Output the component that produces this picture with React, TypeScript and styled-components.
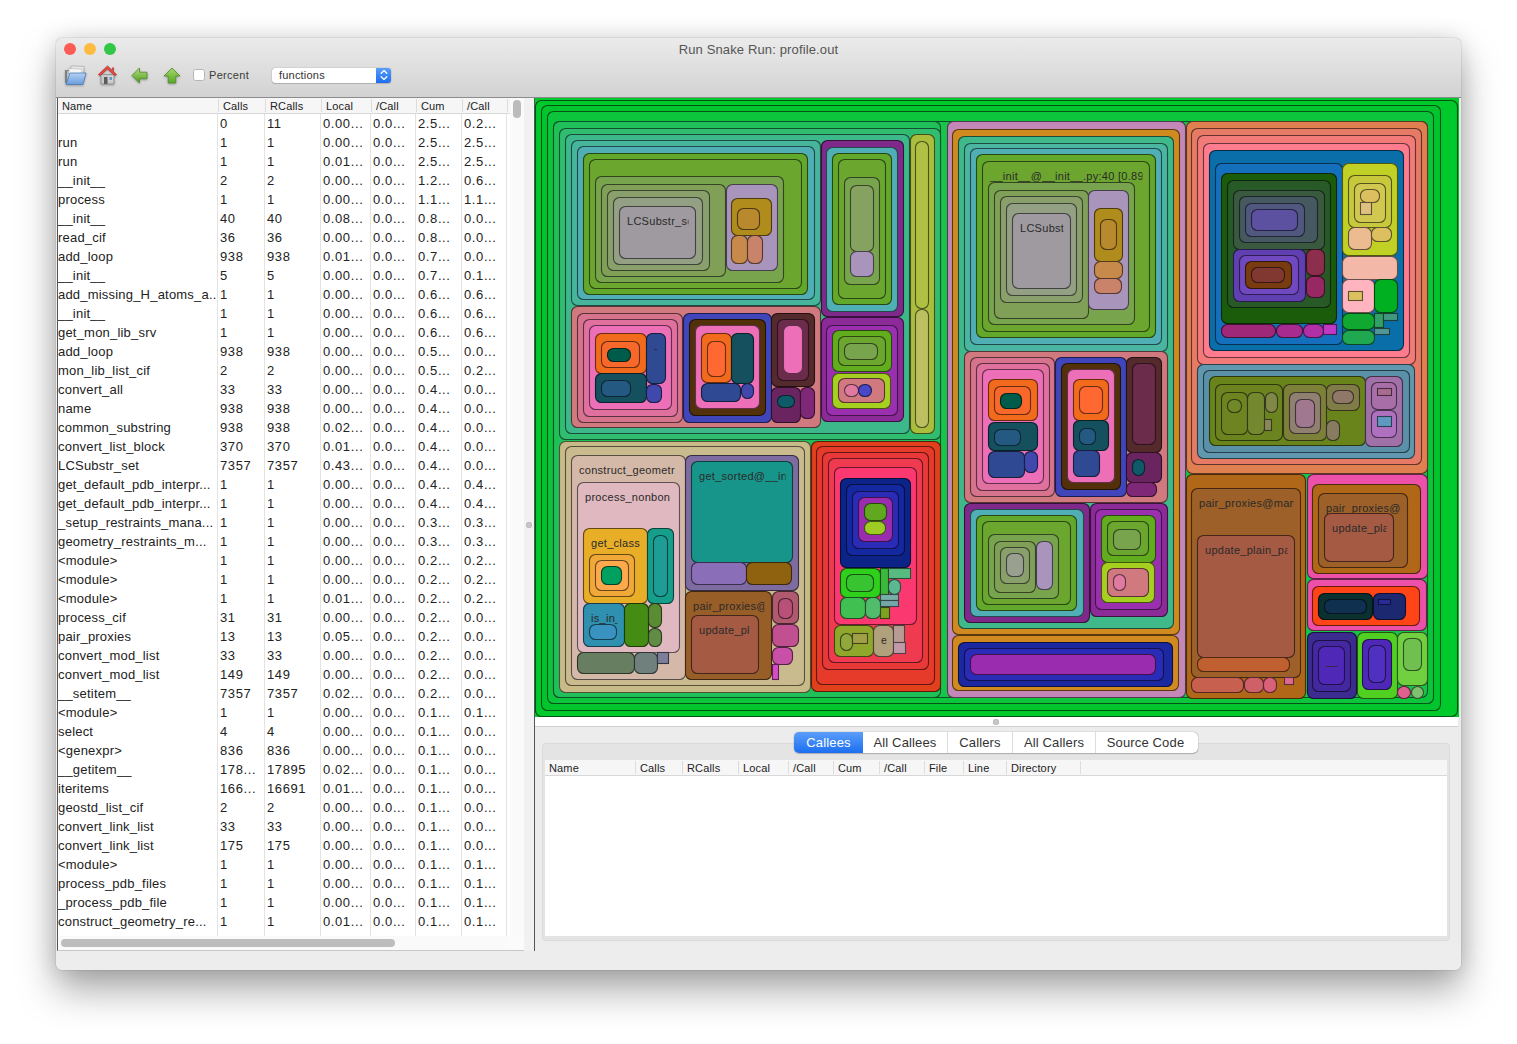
import React from "react";
import styled, { createGlobalStyle } from "styled-components";

const Global = createGlobalStyle`
  html, body { margin: 0; padding: 0; background: #fff; }
  body { font-family: "Liberation Sans", Arial, sans-serif; width: 1517px; height: 1044px; overflow: hidden; }
`;

const Win = styled.div`
  width: 1405px; height: 932px; margin: 38px 0 0 56px;
  display: flex; flex-direction: column;
  border-radius: 6px; background: #ececec;
  box-shadow: 0 0 1px rgba(0,0,0,.55), 0 20px 38px rgba(0,0,0,.34), 0 0 22px rgba(0,0,0,.13);
`;
const TitleBar = styled.header`
  height: 59px; flex: none; border-radius: 6px 6px 0 0;
  background: linear-gradient(#ebebeb, #d2d2d2);
`;
const TitleRow = styled.div`
  height: 22px; box-sizing: border-box;
  display: grid; grid-template-columns: 1fr auto 1fr; align-items: center;
`;
const Lights = styled.div`display: flex; gap: 8px; padding-left: 8px;`;
const Light = styled.span<{ $c: string }>`
  width: 12px; height: 12px; border-radius: 50%; background: ${p => p.$c};
`;
const Title = styled.div`font-size: 13px; color: #555; letter-spacing: .14px;`;
const Toolbar = styled.div`
  height: 30px; display: flex; align-items: center; padding-left: 8px; box-sizing: border-box;
`;
const Tool = styled.svg<{ $gap: number }>`
  margin-left: ${p => p.$gap}px; flex: none;
  filter: drop-shadow(0 1px 1px rgba(0,0,0,.28)) blur(.3px);
`;
const Check = styled.span`
  width: 10px; height: 10px; margin-left: 12px; background: #fff; border: 1px solid #b5b5b5; border-radius: 2.5px;
`;
const CheckLabel = styled.span`font-size: 11px; color: #3a3a3a; margin-left: 4px; letter-spacing: .3px;`;
const Select = styled.div`
  margin-left: 23px; width: 119px; height: 15px; display: flex; justify-content: space-between;
  background: #fff; border-radius: 3px; box-shadow: 0 0 1px rgba(0,0,0,.5), 0 1px 1px rgba(0,0,0,.15);
  font-size: 11px; color: #333; line-height: 15px; letter-spacing: .2px; padding-left: 7px; box-sizing: border-box;
`;
const SelectBtn = styled.span`
  width: 15px; background: linear-gradient(#5a9ff8, #1d6df0); border-radius: 0 3px 3px 0;
  display: flex; align-items: center; justify-content: center;
`;

const Main = styled.main`flex: 1; display: flex; min-height: 0; border-top: 1px solid #8c8c8c;`;
const LeftPane = styled.section`
  width: 466px; margin-left: 1px; flex: none; display: flex; flex-direction: column;
  border-left: 1px solid #555; border-bottom: 1px solid #c8c8c8; background: #fbfbfb;
`;
const ListWrap = styled.div`flex: 1; display: flex; min-height: 0;`;
const List = styled.div`width: 452px; display: flex; flex-direction: column; background: #fff;`;
const HeadRow = styled.div<{ $cols: string; $h: number }>`
  display: grid; grid-template-columns: ${p => p.$cols}; height: ${p => p.$h}px; flex: none;
  background: #f6f6f6; border-bottom: 1px solid #d8d8d8; box-sizing: border-box;
`;
const HeadCell = styled.div`
  font-size: 11px; color: #222; padding: 0 0 0 4px; line-height: 14px; letter-spacing: .15px;
  border-right: 1px solid #dcdcdc; margin: 1px 0; white-space: nowrap; overflow: hidden;
`;
const Row = styled.div<{ $fill?: boolean }>`
  display: grid; grid-template-columns: 160px 47px 56px 50px 45px 46px 45px;
  height: 19px; flex: ${p => (p.$fill ? "1" : "none")};
`;
const Cell = styled.div`
  font-size: 13px; color: #222; line-height: 19px; padding-left: 2px; white-space: nowrap; overflow: hidden;
  border-right: 1px solid #e3e3e3; letter-spacing: .6px;
`;
const NameCell = styled(Cell)`padding-left: 0; letter-spacing: .2px;`;
const VScroll = styled.div`flex: 1; background: #fafafa; padding: 2px 0 0 3px;`;
const VThumb = styled.div`width: 8px; height: 18px; border-radius: 4px; background: #bcbcbc;`;
const HScroll = styled.div`
  height: 14px; flex: none; box-sizing: border-box; background: #fafafa; padding: 3px 0 0 3px; margin-right: 14px;
`;
const HThumb = styled.div`width: 334px; height: 8px; border-radius: 4px; background: #bdbdbd;`;
const Sash = styled.div`width: 10px; flex: none; background: #f1f1f1; display: flex; align-items: center; justify-content: center;`;
const Dot = styled.span`width: 6px; height: 6px; border-radius: 50%; background: #c8c8c8; box-shadow: inset 0 0 0 1px #bbb;`;
const RightPane = styled.section`
  flex: 1; min-width: 0; display: flex; flex-direction: column; border-left: 1px solid #555; padding-right: 3px;
`;
const MapSvg = styled.svg`display: block; flex: none; background: #4a4a4a;`;
const MapRect = styled.rect`stroke-width: 1.1;`;
const MapLabel = styled.text`
  font-family: "Liberation Sans", Arial, sans-serif; font-size: 11px; fill: #2a2a2a; letter-spacing: .28px;
`;
const HSash = styled.div`
  height: 9px; flex: none; background: #fff; display: flex; justify-content: center; align-items: center; padding-right: 2px;
  border-bottom: 1px solid #cfcfcf;
`;
const Notebook = styled.div`flex: 1; min-height: 0; margin: 16px 8px 10px 7px; display: flex; flex-direction: column;
  background: #e4e4e4; border: 1px solid #dadada; border-radius: 4px; padding: 0 2px 4px;`;
const Tabs = styled.div`
  align-self: center; display: flex; height: 21px; margin-top: -12px; margin-bottom: 7px; flex: none;
  background: #fff; border-radius: 5px; box-shadow: 0 0 1px rgba(0,0,0,.55), 0 1px 1px rgba(0,0,0,.2);
`;
const Tab = styled.div<{ $w: number; $on?: boolean }>`
  width: ${p => p.$w}px; text-align: center; font-size: 13px; line-height: 21px; letter-spacing: .15px;
  color: ${p => (p.$on ? "#fff" : "#333")};
  background: ${p => (p.$on ? "linear-gradient(#5b9ef9, #1c6ff1)" : "transparent")};
  border-radius: ${p => (p.$on ? "5px 0 0 5px" : "0")};
  border-right: ${p => (p.$on ? "none" : "1px solid #ddd")};
  box-sizing: border-box;
  &:last-child { border-right: none; padding-right: 3px; }
`;
const Detail = styled.div`flex: 1; background: #fff; display: flex; flex-direction: column;`;
const Bottom = styled.footer`height: 19px; flex: none; border-radius: 0 0 6px 6px; background: #ededed;`;

type N = [number, number, number, number, string, string?, number?];
const nodes: N[] = [
  [535,100,1457,716,"#00c92c"],[541,105,1440,710,"#02c52e"],[547,111,1433,703,"#0cc53c"],[553,121,1427,697,"#17c44c"],
  [553,121,940,697,"#1fc05a"],[559,128,940,439,"#30bd70"],[565,134,909,433,"#3cb88a"],
  [571,140,820,305,"#46b59c"],[577,146,814,299,"#50afb5"],[583,153,807,294,"#62a82a"],[589,159,801,288,"#6ba62e"],[595,176,783,282,"#78a44d"],[601,184,725,276,"#80a058"],[607,190,709,270,"#8aa06c"],[613,197,702,264,"#94a083"],[619,206,695,258,"#9e9aa0","LCSubstr_se"],
  [726,184,777,270,"#a995bc"],[731,198,771,235,"#b08c1d"],[737,208,759,229,"#b8892d"],[731,235,747,263,"#c78a4a"],[747,235,762,263,"#c9836a"],
  [821,140,903,316,"#7f2a8a"],[826,147,897,311,"#50afb5"],[832,153,891,304,"#62a82a"],[838,159,885,298,"#6ba62e"],[844,177,879,284,"#78a44d"],[850,185,873,251,"#86a261"],[850,251,873,276,"#a995bc"],
  [571,306,820,427,"#d07a80"],[577,313,682,422,"#d5748c"],[583,319,677,416,"#e0709e"],[589,325,671,409,"#ec6fb8"],[595,333,646,373,"#f26a1c"],[601,341,639,367,"#f8682b"],[607,348,630,361,"#005c4a"],[646,333,665,383,"#2f4a92","-"],[595,373,646,402,"#14505e"],[601,380,630,396,"#245a82"],[646,384,661,402,"#4048ac"],
  [683,313,771,422,"#4046ba"],[689,319,765,415,"#52300a"],[695,325,759,408,"#ec6fb8"],[701,333,731,382,"#f26a1c"],[707,341,725,376,"#ff6830"],[731,333,753,383,"#14505e"],[701,383,740,401,"#2f4a92"],[741,383,753,398,"#4048ac"],
  [771,313,814,386,"#552a2c"],[777,319,808,380,"#6a2c4a"],[783,325,802,373,"#ec6fb8"],[771,387,800,422,"#6a2560"],[777,395,794,407,"#0f5a68"],[800,387,814,418,"#802878"],
  [821,317,903,421,"#8c2a98"],[826,325,897,415,"#9a30b0"],[832,330,891,371,"#62ad1e"],[838,336,885,365,"#6ba62e"],[844,343,877,359,"#78a44d"],[832,373,890,408,"#a5d020"],[838,378,884,402,"#d07a80"],[844,384,858,396,"#e07aa0"],[858,384,871,396,"#4a48c8"],
  [910,134,934,433,"#aabd3c"],[915,141,928,308,"#b0c044"],[915,309,928,427,"#bcc060"],
  [559,441,810,692,"#c8bb88"],[565,446,804,685,"#cabb8e"],[571,455,685,679,"#d5b9a8","construct_geometr"],[577,482,679,652,"#dfb8c0","process_nonbon"],
  [583,528,647,603,"#e8ae28","get_class"],[589,554,634,596,"#f0a838"],[595,560,628,590,"#ffa84c"],[601,566,621,584,"#00a060"],[647,528,673,603,"#159f8a"],[653,535,667,596,"#1d9d95"],
  [583,603,624,646,"#2f90b0","is_in_"],[589,624,616,639,"#3a92c0"],[624,603,648,646,"#448c14"],[648,603,661,627,"#5a8c34"],[648,628,661,646,"#608c44"],
  [577,652,634,673,"#687e60"],[634,652,657,673,"#70807c"],[657,652,668,663,"#7c7e9c","",1],
  [685,455,798,590,"#7e6ba0"],[691,461,792,562,"#18958a","get_sorted@__in"],[691,562,746,584,"#8a6eb8"],[746,562,791,584,"#8f6210"],
  [685,591,771,679,"#985e28","pair_proxies@"],[691,615,758,673,"#a55a44","update_pl"],[772,591,798,623,"#b05a70"],[778,598,792,618,"#b85078"],[772,624,798,646,"#c05090"],[772,647,792,664,"#c850a8"],[772,664,778,679,"#d84cc8","",1],
  [811,441,940,691,"#e0401c"],[816,446,934,684,"#e63a2a"],[822,452,928,669,"#e83838"],[828,458,922,662,"#f03a50"],[834,467,916,624,"#fc3870"],
  [840,478,910,567,"#0c2488"],[846,484,904,555,"#1428a0"],[852,491,898,548,"#2a2cb8"],[858,497,892,541,"#9a2cb0"],[864,503,886,520,"#5fa820"],[864,521,885,534,"#9ecc24"],
  [840,568,880,597,"#2ed01c"],[846,574,873,591,"#38c430"],[880,568,888,594,"#3cb93a","",1],[888,568,910,578,"#58bc80","",1],[888,579,900,594,"#5cb890"],[880,594,898,600,"#78b0a8","",1],[880,600,898,606,"#74a8a8","",1],[880,607,889,618,"#80a020","",1],
  [840,597,865,618,"#40c050"],[865,597,880,618,"#50bc6c"],[834,625,873,656,"#8fa82c"],[840,633,852,650,"#90a83c"],[852,633,867,643,"#a0a048","",1],
  [873,625,893,656,"#b0a07c","e"],[893,625,904,642,"#b89c94","",1],[893,642,905,653,"#c098a8","",1],
  [947,121,1185,697,"#c488b8"],[952,129,1179,634,"#d08a20"],[958,136,1173,628,"#3fb88a"],[964,143,1167,351,"#4ab5a0"],[970,148,1161,344,"#50afb5"],[976,154,1155,337,"#62a82a"],
  [982,161,1149,331,"#6ca62e","__init__@__init__.py:40 [0.891"],[988,182,1134,324,"#78a44d"],[994,190,1088,318,"#80a058"],[1000,196,1082,302,"#8aa06c"],[1006,203,1076,295,"#94a083"],[1012,213,1070,288,"#9e9aa0","LCSubst"],
  [1088,190,1128,309,"#a995bc"],[1094,208,1122,261,"#b08c1d"],[1100,219,1116,249,"#b8892d"],[1094,261,1122,278,"#c78a4a"],[1094,278,1121,293,"#c9836a"],
  [964,351,1167,502,"#d07a80"],[970,357,1054,496,"#d5748c"],[976,363,1049,490,"#e0709e"],[982,369,1043,483,"#ec6fb8"],[988,379,1037,420,"#f26a1c"],[994,386,1030,414,"#f8682b"],[1000,393,1021,408,"#005c4a"],[988,422,1037,450,"#14505e"],[994,429,1020,445,"#245a82"],[988,451,1024,477,"#2f4a92"],[1024,451,1037,472,"#4048ac"],
  [1055,357,1126,496,"#4046ba"],[1061,363,1120,489,"#52300a"],[1067,369,1114,482,"#ec6fb8"],[1073,379,1108,420,"#f26a1c"],[1079,386,1102,413,"#ff6830"],[1073,420,1108,450,"#14505e"],[1079,428,1095,444,"#245a82"],[1073,450,1099,476,"#2f4a92"],
  [1126,357,1161,452,"#552a2c"],[1132,363,1155,444,"#6a2c4a"],[1126,452,1161,482,"#6a2560"],[1132,459,1144,475,"#0f5a68"],[1126,482,1156,496,"#802878"],
  [964,503,1089,622,"#7f2a8a"],[970,509,1083,616,"#50afb5"],[976,515,1076,610,"#62a82a"],[982,521,1070,604,"#6ba62e"],[988,534,1058,598,"#78a44d"],[994,541,1035,592,"#80a058"],[1000,547,1029,583,"#8aa06c"],[1006,553,1023,576,"#9aa090"],[1036,541,1052,589,"#a995bc"],
  [1090,503,1167,616,"#8c2a98"],[1095,509,1161,609,"#9a30b0"],[1101,515,1155,562,"#62ad1e"],[1107,521,1148,555,"#6ba62e"],[1113,529,1140,549,"#78a44d"],[1101,562,1154,602,"#a5d020"],[1107,568,1148,596,"#d07a80"],[1113,574,1125,590,"#e07aa0"],
  [952,635,1178,690,"#d08a20"],[958,642,1172,686,"#1c28a0"],[964,648,1163,680,"#2a2cb8"],[970,654,1155,674,"#9a2cb0"],
  [1186,121,1427,473,"#e08050"],[1191,128,1421,464,"#e67a64"],[1197,135,1415,364,"#f27a78"],[1203,143,1409,357,"#ff7c8e"],[1209,150,1403,350,"#0a6fa8"],[1215,163,1342,344,"#1470bc"],
  [1221,173,1336,323,"#1a5c0a"],[1227,180,1330,307,"#285a28"],[1233,190,1324,249,"#3a5a40"],[1239,196,1317,242,"#465860"],[1245,203,1304,236,"#505880"],[1251,209,1297,230,"#5c50a0"],
  [1233,249,1305,301,"#6040b0"],[1239,255,1298,294,"#7048c0"],[1245,261,1291,288,"#783c10"],[1251,267,1284,282,"#803830"],[1306,249,1324,275,"#8c2e4c"],[1306,276,1324,297,"#982864"],
  [1221,324,1275,337,"#a02878"],[1276,324,1302,337,"#a82c90"],[1303,324,1323,337,"#b030a8"],[1323,324,1336,334,"#c038c4","",1],
  [1342,163,1397,255,"#c0d024"],[1348,175,1391,227,"#c8c83c"],[1354,183,1385,222,"#d0c850"],[1360,189,1379,202,"#dcc060"],[1360,202,1371,214,"#e0c080","",1],[1348,227,1371,249,"#ecbc90"],[1371,227,1391,241,"#dcc060"],
  [1342,256,1397,279,"#f4b8a8"],[1342,279,1374,312,"#ffb4c0"],[1348,291,1362,300,"#dcc060","",1],[1374,279,1397,312,"#00b020"],[1342,313,1374,329,"#10a830"],[1342,330,1374,344,"#20a850"],
  [1374,313,1383,327,"#30a068","",1],[1383,313,1397,320,"#409880","",1],[1374,328,1389,334,"#509898","",1],
  [1197,364,1414,458,"#6098b0"],[1203,370,1409,452,"#5a90a8"],[1209,376,1365,445,"#68841a"],[1215,384,1282,440,"#6c8420"],[1221,392,1247,434,"#6e8420"],[1227,399,1241,412,"#708828"],[1247,392,1264,434,"#748830"],[1265,392,1277,412,"#808848"],[1264,419,1271,430,"#888858","",1],
  [1283,384,1326,440,"#7c8038"],[1289,392,1320,433,"#908070"],[1295,399,1314,427,"#a07890"],[1326,384,1359,410,"#807c48"],[1332,390,1353,403,"#907868"],[1326,420,1339,440,"#887c60"],
  [1365,376,1402,446,"#a070a8"],[1371,382,1396,409,"#a86ea8"],[1377,388,1391,395,"#a86c90","",1],[1371,410,1396,437,"#b070c0"],[1377,416,1391,426,"#6098c0","",1],
  [1186,474,1305,698,"#b06818"],[1191,488,1300,677,"#9c6028","pair_proxies@man"],[1197,535,1294,657,"#a55a44","update_plain_pa"],[1197,657,1289,671,"#c06030"],[1191,677,1243,692,"#c86050"],[1244,677,1263,692,"#d06068"],[1263,677,1276,692,"#d86078"],[1284,677,1293,684,"#e06890","",1],
  [1307,474,1427,578,"#ec50a8"],[1312,484,1420,573,"#b06818"],[1318,493,1407,567,"#9c6028","pair_proxies@"],[1324,513,1393,561,"#a55a44","update_pla"],
  [1307,579,1426,630,"#ec50a8"],[1312,586,1419,625,"#ff4418"],[1318,593,1372,619,"#0a3030"],[1324,599,1366,613,"#103050"],[1373,593,1405,619,"#1c2870"],[1378,599,1390,604,"#2a2c98","",1],
  [1307,632,1356,698,"#3c2c90"],[1312,640,1350,691,"#4428a0"],[1318,646,1344,684,"#5028b8","__i"],[1357,632,1397,698,"#50d020"],[1362,639,1391,689,"#5028b8"],[1368,645,1385,682,"#5030c0"],
  [1397,632,1427,685,"#70d040"],[1403,638,1421,670,"#70c050"],[1397,686,1410,698,"#e06090"],[1411,686,1423,698,"#80c070"],
];

const darken = (hex: string) => {
  const n = parseInt(hex.slice(1), 16);
  const f = (v: number) => Math.round(v * 0.42);
  return `rgb(${f(n >> 16)},${f((n >> 8) & 255)},${f(n & 255)})`;
};

const rows = `|0|11|0.00|0.0|2.5|0.2
run|1|1|0.00|0.0|2.5|2.5
run|1|1|0.01|0.0|2.5|2.5
__init__|2|2|0.00|0.0|1.2|0.6
process|1|1|0.00|0.0|1.1|1.1
__init__|40|40|0.08|0.0|0.8|0.0
read_cif|36|36|0.00|0.0|0.8|0.0
add_loop|938|938|0.01|0.0|0.7|0.0
__init__|5|5|0.00|0.0|0.7|0.1
add_missing_H_atoms_a..|1|1|0.00|0.0|0.6|0.6
__init__|1|1|0.00|0.0|0.6|0.6
get_mon_lib_srv|1|1|0.00|0.0|0.6|0.6
add_loop|938|938|0.00|0.0|0.5|0.0
mon_lib_list_cif|2|2|0.00|0.0|0.5|0.2
convert_all|33|33|0.00|0.0|0.4|0.0
name|938|938|0.00|0.0|0.4|0.0
common_substring|938|938|0.02|0.0|0.4|0.0
convert_list_block|370|370|0.01|0.0|0.4|0.0
LCSubstr_set|7357|7357|0.43|0.0|0.4|0.0
get_default_pdb_interpr...|1|1|0.00|0.0|0.4|0.4
get_default_pdb_interpr...|1|1|0.00|0.0|0.4|0.4
_setup_restraints_mana...|1|1|0.00|0.0|0.3|0.3
geometry_restraints_m...|1|1|0.00|0.0|0.3|0.3
<module>|1|1|0.00|0.0|0.2|0.2
<module>|1|1|0.00|0.0|0.2|0.2
<module>|1|1|0.01|0.0|0.2|0.2
process_cif|31|31|0.00|0.0|0.2|0.0
pair_proxies|13|13|0.05|0.0|0.2|0.0
convert_mod_list|33|33|0.00|0.0|0.2|0.0
convert_mod_list|149|149|0.00|0.0|0.2|0.0
__setitem__|7357|7357|0.02|0.0|0.2|0.0
<module>|1|1|0.00|0.0|0.1|0.1
select|4|4|0.00|0.0|0.1|0.0
<genexpr>|836|836|0.00|0.0|0.1|0.0
__getitem__|178...|17895|0.02|0.0|0.1|0.0
iteritems|166...|16691|0.01|0.0|0.1|0.0
geostd_list_cif|2|2|0.00|0.0|0.1|0.0
convert_link_list|33|33|0.00|0.0|0.1|0.0
convert_link_list|175|175|0.00|0.0|0.1|0.0
<module>|1|1|0.00|0.0|0.1|0.1
process_pdb_files|1|1|0.00|0.0|0.1|0.1
_process_pdb_file|1|1|0.00|0.0|0.1|0.1
construct_geometry_re...|1|1|0.01|0.0|0.1|0.1`.split("\n").map(l => l.split("|"));

const listCols = "161px 47px 56px 50px 45px 46px 45px";
const listHead = ["Name", "Calls", "RCalls", "Local", "/Call", "Cum", "/Call"];
const detailCols = "91px 47px 56px 50px 45px 46px 45px 39px 43px 74px";
const detailHead = ["Name", "Calls", "RCalls", "Local", "/Call", "Cum", "/Call", "File", "Line", "Directory"];

const FolderIcon = () => (
  <Tool $gap={0} width="23" height="21" viewBox="0 0 23 21">
    <defs>
      <linearGradient id="fb" x1="0" y1="0" x2="0" y2="1"><stop offset="0" stopColor="#b4d3f5" /><stop offset="1" stopColor="#6a9cdb" /></linearGradient>
    </defs>
    <path d="M1 5h6l1-2h6v3H3v12H1z" fill="#7a8086" />
    <path d="M7 1l13 .5-.5 7H7z" fill="#e8e8e8" stroke="#a8a8a8" strokeWidth=".6" />
    <path d="M5 3.5l13 .5-.5 5H5z" fill="#f5f5f5" stroke="#b5b5b5" strokeWidth=".6" />
    <path d="M6 8h16l-3 11.5H2z" fill="url(#fb)" stroke="#4d7ab0" strokeWidth=".8" strokeLinejoin="round" />
  </Tool>
);
const HomeIcon = () => (
  <Tool $gap={11} width="19" height="20" viewBox="0 0 19 20">
    <path d="M3 9.5h13V19H3z" fill="#c9c9c9" stroke="#7e7e7e" strokeWidth=".7" />
    <path d="M6 12h3.5v7H6z" fill="#5a5a5a" />
    <path d="M11 11.5h3.5v4H11z" fill="#6d93c4" stroke="#f0f0f0" strokeWidth=".6" />
    <path d="M9.5 1L18.5 9.5l-1.5 1.2L9.5 4 2 10.7.5 9.5z" fill="#e84a45" stroke="#b22a26" strokeWidth=".7" strokeLinejoin="round" />
    <path d="M14 2.5h2v4l-2-1.8z" fill="#d24540" />
  </Tool>
);
const LeftIcon = () => (
  <Tool $gap={14} width="17" height="17" viewBox="0 0 17 17">
    <defs>
      <linearGradient id="gl" x1="0" y1="0" x2="0" y2="1"><stop offset="0" stopColor="#b6e07c" /><stop offset="1" stopColor="#4d9a22" /></linearGradient>
    </defs>
    <path d="M1 8.5L8.5 1v4.2H16v6.6H8.5V16z" fill="url(#gl)" stroke="#4f8a26" strokeWidth=".8" strokeLinejoin="round" />
  </Tool>
);
const UpIcon = () => (
  <Tool $gap={15} width="18" height="17" viewBox="0 0 18 17">
    <defs>
      <linearGradient id="gu" x1="0" y1="0" x2="0" y2="1"><stop offset="0" stopColor="#a8d96c" /><stop offset="1" stopColor="#58a626" /></linearGradient>
    </defs>
    <path d="M9 1l8 8h-4.2v7H5.2V9H1z" fill="url(#gu)" stroke="#4f8a26" strokeWidth=".8" strokeLinejoin="round" />
  </Tool>
);

export default function App() {
  return (
    <>
      <Global />
      <Win>
        <TitleBar>
          <TitleRow>
            <Lights>
              <Light $c="#fc5c55" />
              <Light $c="#fdbc40" />
              <Light $c="#33c748" />
            </Lights>
            <Title>Run Snake Run: profile.out</Title>
          </TitleRow>
          <Toolbar>
            <FolderIcon />
            <HomeIcon />
            <LeftIcon />
            <UpIcon />
            <Check />
            <CheckLabel>Percent</CheckLabel>
            <Select>
              functions
              <SelectBtn>
                <svg width="8" height="12" viewBox="0 0 8 12" fill="none" stroke="#fff" strokeWidth="1.3" strokeLinecap="round" strokeLinejoin="round">
                  <path d="M1.2 4.2L4 1.6l2.8 2.6M1.2 7.8L4 10.4l2.8-2.6" />
                </svg>
              </SelectBtn>
            </Select>
          </Toolbar>
        </TitleBar>
        <Main>
          <LeftPane>
            <ListWrap>
              <List>
                <HeadRow $cols={listCols} $h={16}>
                  {listHead.map((h, i) => <HeadCell key={i}>{h}</HeadCell>)}
                </HeadRow>
                {rows.map((r, i) => (
                  <Row key={i}>
                    <NameCell>{r[0]}</NameCell>
                    <Cell>{r[1]}</Cell>
                    <Cell>{r[2]}</Cell>
                    {r.slice(3).map((v, j) => <Cell key={j}>{v}...</Cell>)}
                  </Row>
                ))}
                <Row $fill>
                  {listHead.map((h, i) => <Cell key={i} />)}
                </Row>
              </List>
              <VScroll><VThumb /></VScroll>
            </ListWrap>
            <HScroll><HThumb /></HScroll>
          </LeftPane>
          <Sash><Dot /></Sash>
          <RightPane>
            <MapSvg width="924" height="619" viewBox="535 98 924 619">
              <rect x="534" y="98" width="925" height="620" fill="#00c92c" />
              {nodes.map((n, i) => {
                const [a, b, c, d, col, label, sharp] = n;
                const w = c - a, h = d - b;
                return (
                  <g key={i}>
                    <MapRect x={a + .5} y={b + .5} width={w} height={h} rx={sharp ? 0 : Math.min(6, Math.min(w, h) / 2)} fill={col} stroke={darken(col)} />
                    {label ? (
                      <>
                        <clipPath id={`lc${i}`}><rect x={a + 1} y={b + 1} width={Math.max(0, w - 7.5)} height={h} /></clipPath>
                        <MapLabel x={a + 8} y={b + 19} clipPath={`url(#lc${i})`}>{label}</MapLabel>
                      </>
                    ) : null}
                  </g>
                );
              })}
            </MapSvg>
            <HSash><Dot /></HSash>
            <Notebook>
              <Tabs>
                <Tab $w={69} $on>Callees</Tab>
                <Tab $w={85}>All Callees</Tab>
                <Tab $w={65}>Callers</Tab>
                <Tab $w={83}>All Callers</Tab>
                <Tab $w={102}>Source Code</Tab>
              </Tabs>
              <Detail>
                <HeadRow $cols={detailCols} $h={16}>
                  {detailHead.map((h, i) => <HeadCell key={i}>{h}</HeadCell>)}
                </HeadRow>
              </Detail>
            </Notebook>
          </RightPane>
        </Main>
        <Bottom />
      </Win>
    </>
  );
}
